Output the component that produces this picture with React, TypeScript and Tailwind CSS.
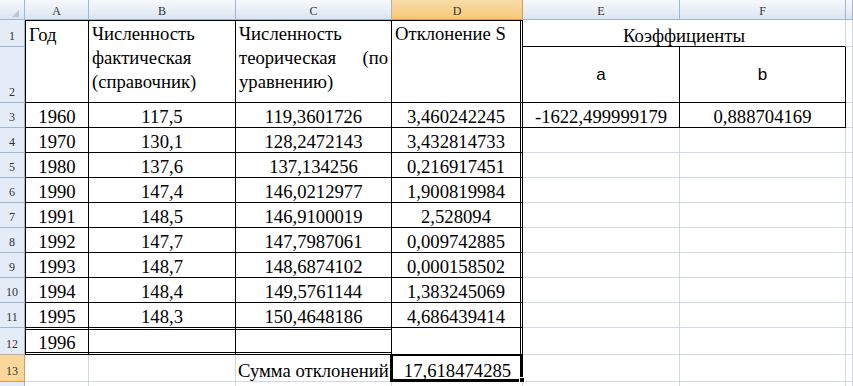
import React from "react";

const GRID = "border-r border-b border-r-[#d0d7e5] border-b-[#d0d7e5]";
const CELL_TXT = "flex items-end justify-center leading-[21px] text-[18.67px] text-black whitespace-nowrap";
const A_B = "border-l border-r border-b border-l-black border-r-black border-b-black";
const BC_B = "border-r border-b border-r-black border-b-black";
const D_B = "border-r-[3px] border-b border-double border-r-black border-b-black";
const DBL = "shadow-[inset_0_1px_0_0_#fff,inset_0_-1px_0_0_#fff,inset_0_2px_0_0_#000,inset_0_-2px_0_0_#000]";

const COLHDR =
  "bg-linear-to-b from-[#f6f9fc] to-[#dbe5f1] border-r border-b border-r-[#9eb6ce] border-b-[#9eb6ce] flex items-center justify-center pt-[4px] text-[12px] leading-[13px] text-[#333]";
const COLHDR_SEL =
  "bg-linear-to-b from-[#f9dca8] to-[#f4c878] border-r border-b border-r-[#f29536] border-b-[#f29536] flex items-center justify-center pt-[4px] text-[12px] leading-[13px] text-[#333]";
const ROWHDR =
  "bg-[#e4ecf7] border-r border-b border-r-[#9eb6ce] border-b-[#9eb6ce] flex items-end justify-center pb-[3px] text-[12px] leading-[13px] text-[#333]";
const ROWHDR_SEL =
  "bg-[#fbd79c] border-r border-b border-r-[#f29536] border-b-[#f29536] flex items-end justify-center pb-[3px] text-[12px] leading-[13px] text-[#333]";

const data: [string, string, string, string][] = [
  ["1960", "117,5", "119,3601726", "3,460242245"],
  ["1970", "130,1", "128,2472143", "3,432814733"],
  ["1980", "137,6", "137,134256", "0,216917451"],
  ["1990", "147,4", "146,0212977", "1,900819984"],
  ["1991", "148,5", "146,9100019", "2,528094"],
  ["1992", "147,7", "147,7987061", "0,009742885"],
  ["1993", "148,7", "148,6874102", "0,000158502"],
  ["1994", "148,4", "149,5761144", "1,383245069"],
  ["1995", "148,3", "150,4648186", "4,686439414"],
];

export default function App() {
  return (
    <div className="w-[853px] h-[386px] overflow-hidden bg-white font-serif">
      <div className="[font-family:Liberation_Serif,serif] grid grid-cols-[25px_64px_147px_156px_131px_157px_166px_1fr] grid-rows-[20px_27px_56px_repeat(9,25px)_27px_27px_25px]">
        {/* header row */}
        <div className={`${COLHDR} relative`}>
          <svg className="absolute left-0 top-0" width="24" height="19" viewBox="0 0 24 19">
            <polygon points="12,17 19,17 19,10" fill="#b7c7da" />
          </svg>
        </div>
        <div className={COLHDR}>A</div>
        <div className={COLHDR}>B</div>
        <div className={COLHDR}>C</div>
        <div className={COLHDR_SEL}>D</div>
        <div className={COLHDR}>E</div>
        <div className={COLHDR}>F</div>
        <div className={COLHDR}></div>

        {/* row 1 */}
        <div className={ROWHDR}>1</div>
        <div className={`row-span-2 border-t border-t-black ${A_B} px-[3px] pt-[2px] text-[18.67px] leading-[24px]`}>Год</div>
        <div className={`row-span-2 border-t border-t-black ${BC_B} px-[3px] pt-[1px] text-[18.67px] leading-[24px]`}>
          Численность фактическая (справочник)
        </div>
        <div className={`row-span-2 border-t border-t-black ${BC_B} px-[3px] pt-[1px] text-[18.67px] leading-[24px] text-justify`}>
          Численность теорическая (по уравнению)
        </div>
        <div className={`row-span-2 border-t border-t-black ${D_B} px-[3px] pt-[1px] text-[18.67px] leading-[24px]`}>
          Отклонение S
        </div>
        <div className={`col-span-2 border-r border-b border-r-[#d0d7e5] border-b-black ${CELL_TXT}`}>Коэффициенты</div>
        <div className={GRID}></div>

        {/* row 2 */}
        <div className={ROWHDR}>2</div>
        <div className={`${BC_B} flex items-center justify-center text-[17px] [font-family:Liberation_Sans,sans-serif]`}>a</div>
        <div className={`${BC_B} flex items-center justify-center text-[17px] [font-family:Liberation_Sans,sans-serif]`}>b</div>
        <div className={GRID}></div>

        {/* rows 3-11 */}
        {data.map((r, i) => (
          <React.Fragment key={i}>
            <div className={ROWHDR}>{i + 3}</div>
            <div className={`${A_B} ${CELL_TXT}`}>{r[0]}</div>
            <div className={`${BC_B} ${CELL_TXT}`}>{r[1]}</div>
            <div className={`${BC_B} ${CELL_TXT}`}>{r[2]}</div>
            <div className={`${D_B} ${CELL_TXT}`}>{r[3]}</div>
            <div className={`${i === 0 ? BC_B : GRID} ${CELL_TXT}`}>{i === 0 ? "-1622,499999179" : ""}</div>
            <div className={`${i === 0 ? BC_B : GRID} ${CELL_TXT}`}>{i === 0 ? "0,888704169" : ""}</div>
            <div className={GRID}></div>
          </React.Fragment>
        ))}

        {/* row 12 */}
        <div className={ROWHDR}>12</div>
        <div className={`${A_B} ${DBL} ${CELL_TXT} pb-[1px]`}>1996</div>
        <div className={`${BC_B} ${DBL}`}></div>
        <div className={`${BC_B} ${DBL}`}></div>
        <div className={D_B}></div>
        <div className={GRID}></div>
        <div className={GRID}></div>
        <div className={GRID}></div>

        {/* row 13 */}
        <div className={ROWHDR_SEL}>13</div>
        <div className={GRID}></div>
        <div className={GRID}></div>
        <div className={`${GRID} flex items-end justify-start pl-[2px] leading-[21px] text-[18.67px] whitespace-nowrap`}>
          Сумма отклонений
        </div>
        <div className={`relative border-b border-b-[#d0d7e5] ${CELL_TXT}`}>
          17,618474285
          <div className="absolute -left-[2px] -top-[1px] right-0 -bottom-[1px] border-[3px] border-t-2 border-black pointer-events-none"></div>
          <div className="absolute -right-[2px] -bottom-[2px] w-[6px] h-[6px] bg-black border border-white"></div>
        </div>
        <div className={GRID}></div>
        <div className={GRID}></div>
        <div className={GRID}></div>

        {/* row 14 */}
        <div className={ROWHDR}></div>
        <div className={GRID}></div>
        <div className={GRID}></div>
        <div className={GRID}></div>
        <div className={GRID}></div>
        <div className={GRID}></div>
        <div className={GRID}></div>
        <div className={GRID}></div>
      </div>
    </div>
  );
}
